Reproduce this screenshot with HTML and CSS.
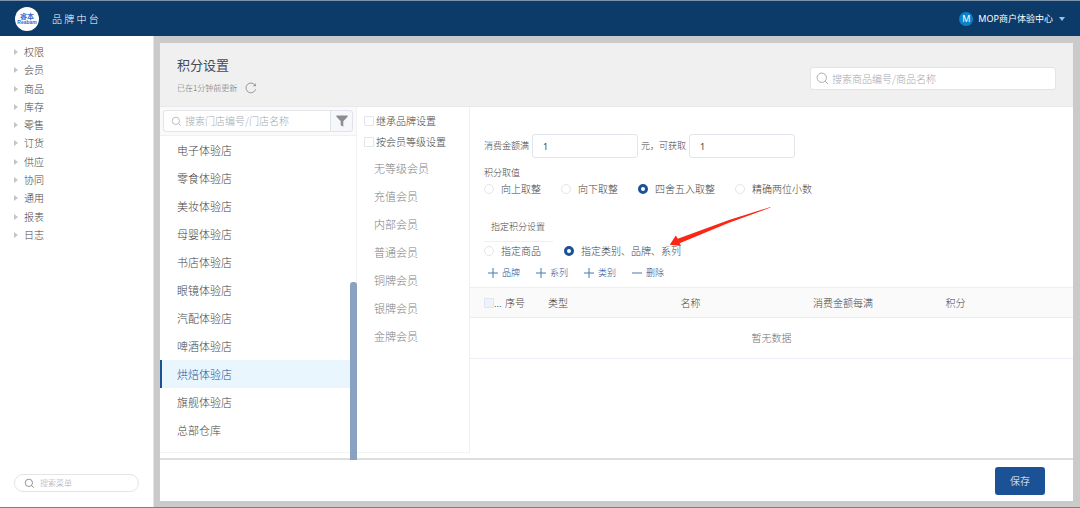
FILE: index.html
```html
<!DOCTYPE html>
<html lang="zh-CN">
<head>
<meta charset="utf-8">
<meta name="viewport" content="width=device-width, initial-scale=1">
<title>积分设置</title>
<link rel="stylesheet" href="styles.css">
</head>
<body>
<div class="app">
  <header class="topbar">
    <svg class="logo" viewBox="0 0 26 26" role="img" aria-label="睿本 Reabam">
      <circle cx="13" cy="13" r="12" fill="#fff"/>
      <text class="logo-cn" x="13" y="13" text-anchor="middle">睿本</text>
      <text class="logo-en" x="13" y="18" text-anchor="middle">Reabam</text>
    </svg>
    <span class="brand">品 牌 中 台</span>
    <button class="account" type="button">
      <span class="avatar">M</span>
      <span>MOP商户体验中心</span>
      <span class="caret"></span>
    </button>
  </header>

  <div class="body">
    <aside class="sidebar">
      <nav>
        <ul class="menu">
          <li><a href="#">权限</a></li>
          <li><a href="#">会员</a></li>
          <li><a href="#">商品</a></li>
          <li><a href="#">库存</a></li>
          <li><a href="#">零售</a></li>
          <li><a href="#">订货</a></li>
          <li><a href="#">供应</a></li>
          <li><a href="#">协同</a></li>
          <li><a href="#">通用</a></li>
          <li><a href="#">报表</a></li>
          <li><a href="#">日志</a></li>
        </ul>
      </nav>
      <label class="menu-search">
        <svg class="icon-menu-search" viewBox="0 0 12 12"><circle cx="5.3" cy="5.3" r="4"/><path d="M8.2 8.2L10.6 10.6"/></svg>
        <input type="text" placeholder="搜索菜单" aria-label="搜索菜单">
      </label>
    </aside>

    <main class="panel">
      <div class="panel-head">
        <div>
          <h1>积分设置</h1>
          <div class="updated">
            <span>已在1分钟前更新</span>
            <button class="refresh" type="button" aria-label="刷新">
              <svg viewBox="0 0 12 12"><path d="M10.6 7.4A4.9 4.9 0 1 1 9.8 2.9"/><path class="head" d="M10.9 1.2V4.3H7.8Z"/></svg>
            </button>
          </div>
        </div>
        <label class="goods-search">
          <svg class="icon-goods-search" viewBox="0 0 14 14"><circle cx="6.2" cy="6.2" r="5"/><path d="M9.8 9.8L13 13"/></svg>
          <input type="text" placeholder="搜索商品编号/商品名称" aria-label="搜索商品">
        </label>
      </div>

      <div class="columns">
        <section class="stores">
          <div class="store-tools">
            <label class="store-search">
              <svg class="icon-store-search" viewBox="0 0 12 12"><circle cx="5.3" cy="5.3" r="4"/><path d="M8.2 8.2L10.6 10.6"/></svg>
              <input type="text" placeholder="搜索门店编号/门店名称" aria-label="搜索门店">
            </label>
            <button class="filter" type="button" aria-label="筛选">
              <svg viewBox="0 0 12 12"><path d="M.4.4H11.6V1.8L7.3 6.2V11.8L4.7 10.2V6.2L.4 1.8Z"/></svg>
            </button>
          </div>
          <ul class="store-list">
            <li>电子体验店</li>
            <li>零食体验店</li>
            <li>美妆体验店</li>
            <li>母婴体验店</li>
            <li>书店体验店</li>
            <li>眼镜体验店</li>
            <li>汽配体验店</li>
            <li>啤酒体验店</li>
            <li class="selected">烘焙体验店</li>
            <li>旗舰体验店</li>
            <li>总部仓库</li>
          </ul>
          <div class="scroll-thumb"></div>
        </section>

        <section class="members">
          <div class="checks">
            <label><input class="box" type="checkbox">继承品牌设置</label>
            <label><input class="box" type="checkbox">按会员等级设置</label>
          </div>
          <ul class="member-list">
            <li>无等级会员</li>
            <li>充值会员</li>
            <li>内部会员</li>
            <li>普通会员</li>
            <li>铜牌会员</li>
            <li>银牌会员</li>
            <li>金牌会员</li>
          </ul>
        </section>

        <section class="settings">
          <div class="form">
            <div class="amounts">
              <label for="spend">消费金额满</label>
              <input id="spend" type="text" value="1">
              <label for="gain">元，可获取</label>
              <input id="gain" type="text" value="1">
            </div>
            <div class="caption">积分取值</div>
            <div class="radios rounding">
              <label><input type="radio" name="round">向上取整</label>
              <label><input type="radio" name="round">向下取整</label>
              <label><input type="radio" name="round" checked>四舍五入取整</label>
              <label><input type="radio" name="round">精确两位小数</label>
            </div>
            <h2>指定积分设置</h2>
            <div class="radios scope">
              <label><input type="radio" name="scope">指定商品</label>
              <label><input type="radio" name="scope" checked>指定类别、品牌、系列</label>
            </div>
            <div class="actions">
              <button type="button"><svg viewBox="0 0 10 10"><path d="M0 5H10M5 0V10"/></svg>品牌</button>
              <button type="button"><svg viewBox="0 0 10 10"><path d="M0 5H10M5 0V10"/></svg>系列</button>
              <button type="button"><svg viewBox="0 0 10 10"><path d="M0 5H10M5 0V10"/></svg>类别</button>
              <button type="button"><svg viewBox="0 0 10 10"><path d="M0 5H10"/></svg>删除</button>
            </div>
            <svg class="arrow" viewBox="0 0 102 40"><path d="M101.5 0L60 13L8.8 31.800L6.800 28.400L.8 37.800L12 39L10.600 36.300L60 15.800L101.500 .6Z"/></svg>
          </div>
          <table>
            <thead>
              <tr>
                <th class="col-check"><span class="check-cell"><input class="box" type="checkbox" aria-label="全选" disabled>...</span></th>
                <th class="col-index">序号</th>
                <th>类型</th>
                <th>名称</th>
                <th>消费金额每满</th>
                <th>积分</th>
              </tr>
            </thead>
            <tbody>
              <tr><td colspan="6">暂无数据</td></tr>
            </tbody>
          </table>
        </section>
      </div>

      <footer class="panel-foot">
        <button class="save" type="button">保存</button>
      </footer>
    </main>
  </div>
</div>
</body>
</html>
```
FILE: styles.css
```css
* {
  box-sizing: border-box;
}

body {
  margin: 0;
  font-family: "Noto Sans CJK SC", "Noto Sans", sans-serif;
  font-size: 10px;
  font-weight: 300;
  line-height: 16px;
  color: #444;
}

ul {
  margin: 0;
  padding: 0;
  list-style: none;
}

a {
  color: inherit;
  text-decoration: none;
}

button,
input {
  margin: 0;
  padding: 0;
  border: 0;
  background: none;
  font: inherit;
  color: inherit;
}

input[type="text"] {
  min-width: 0;
  outline: 0;
}

input::placeholder {
  color: #a4a8b0;
  opacity: 1;
}

svg {
  display: block;
  flex: none;
  fill: none;
}

.app {
  display: flex;
  flex-direction: column;
  min-height: 100vh;
  border-top: 1px solid #7d94aa;
  border-bottom: 1px solid #7f8079;
  background: #cacaca;
}

/* Top bar */

.topbar {
  display: flex;
  align-items: center;
  height: 35px;
  padding: 0 15px 0 14px;
  background: #0c3a69;
  color: #fff;
}

.logo {
  width: 26px;
  height: 26px;
}

.logo-cn {
  fill: #3268d8;
  font-size: 7px;
  font-weight: 700;
}

.logo-en {
  fill: #3268d8;
  font-family: "Liberation Sans", sans-serif;
  font-size: 5px;
  font-weight: 700;
}

.brand {
  margin-left: 12px;
  font-size: 10px;
  font-weight: 300;
}

.account {
  display: flex;
  align-items: center;
  margin-left: auto;
  font-family: "Noto Sans", "Noto Sans CJK SC", sans-serif;
  font-size: 9px;
  font-weight: 400;
}

.avatar {
  width: 14px;
  height: 14px;
  margin-right: 5px;
  border-radius: 50%;
  background: #0b82ca;
  line-height: 14px;
  text-align: center;
}

.caret {
  margin-left: 6px;
  border: 3px solid transparent;
  border-top: 4px solid #8cc8ee;
  border-bottom: 0;
}

.body {
  display: flex;
  flex: 1;
}

/* Sidebar */

.sidebar {
  display: flex;
  flex-direction: column;
  justify-content: space-between;
  width: 154px;
  padding: 7px 14px 15px;
  border-right: 1px solid #e4e4e4;
  background: #fff;
}

.menu {
  display: grid;
  grid-auto-rows: 1fr;
  min-height: 201px;
}

.menu a {
  display: flex;
  align-items: center;
  height: 100%;
  gap: 6px;
}

.menu a::before {
  content: "";
  border: 3px solid transparent;
  border-left: 4px solid #c3c5c9;
  border-right: 0;
}

.menu-search {
  display: flex;
  align-items: center;
  gap: 5px;
  height: 18px;
  padding: 0 9px;
  border: 1px solid #e4e4e4;
  border-radius: 9px;
  font-size: 8px;
}

.menu-search input {
  width: 100%;
}

.icon-menu-search {
  width: 11px;
  height: 11px;
  stroke: #8a8a8a;
}

/* Panel */

.panel {
  display: flex;
  flex: 1;
  flex-direction: column;
  min-width: 0;
  margin: 7px 7px 6px 6px;
  background: #fff;
}

.panel-head {
  display: flex;
  justify-content: space-between;
  height: 64px;
  padding: 12px 17px 0;
  border-bottom: 1px solid #e9e9e9;
  background: #f0f0f0;
}

h1 {
  margin: 0;
  font-size: 13px;
  font-weight: 400;
  line-height: 20px;
  color: #434a54;
}

.updated {
  display: flex;
  align-items: center;
  gap: 8px;
  height: 25px;
  font-size: 8px;
  color: #666;
}

.refresh svg {
  width: 12px;
  height: 12px;
  stroke: #999;
}

.refresh .head {
  fill: #999;
  stroke: none;
}

.goods-search {
  display: flex;
  align-items: center;
  gap: 3px;
  width: 246px;
  height: 23px;
  margin-top: 12px;
  padding: 0 5px;
  border: 1px solid #e2e4e9;
  border-radius: 3px;
  background: #fff;
}

.goods-search input {
  flex: 1;
}

.icon-goods-search {
  width: 13px;
  height: 13px;
  stroke: #a6a9b0;
}

.columns {
  display: flex;
  flex: 1;
  padding-bottom: 5px;
}

/* Stores */

.stores {
  position: relative;
  width: 197px;
  border-right: 1px solid #f3f3f3;
  border-bottom: 1px solid #f3f3f3;
  font-size: 11px;
}

.store-tools {
  display: flex;
  padding: 3px;
  border-bottom: 1px solid #f0f0f0;
  background: #fafafa;
  font-size: 10px;
}

.store-search {
  display: flex;
  flex: 1;
  align-items: center;
  gap: 3px;
  height: 22px;
  min-width: 0;
  padding: 0 7px;
  border: 1px solid #e2e4e9;
  border-right: 0;
  border-radius: 3px 0 0 3px;
  background: #fff;
}

.store-search input {
  flex: 1;
}

.icon-store-search {
  width: 11px;
  height: 11px;
  stroke: #b4b8c0;
}

.filter {
  display: grid;
  place-items: center;
  width: 23px;
  border: 1px solid #e0e3e9;
  border-radius: 0 3px 3px 0;
  background: #f5f7fa;
}

.filter svg {
  width: 12px;
  height: 12px;
  fill: #8c8c8c;
}

.store-list li {
  height: 28px;
  padding-left: 17px;
  line-height: 28px;
}

.store-list .selected {
  padding-left: 15px;
  border-left: 2px solid #1b5296;
  background: #e9f6fe;
  color: #1b5296;
}

.scroll-thumb {
  position: absolute;
  right: -1px;
  bottom: -8px;
  width: 7px;
  height: 178px;
  border-radius: 3px 3px 0 0;
  background: #8aa2c2;
}

/* Members */

.members {
  width: 113px;
  border-right: 1px solid #f0f0f0;
  border-bottom: 1px solid #f3f3f3;
}

.checks {
  display: grid;
  gap: 5px;
  padding: 6px 0 4px 7px;
}

.checks label {
  display: flex;
  align-items: center;
  gap: 2px;
}

.box {
  appearance: none;
  width: 10px;
  height: 10px;
  border: 1px solid #e2e5eb;
  border-radius: 1px;
  background: #fff;
}

.box:disabled {
  background: #edf2fc;
}

.member-list {
  padding-left: 17px;
  font-size: 11px;
  line-height: 28px;
  color: #808080;
}

/* Settings */

.settings {
  flex: 1;
  min-width: 0;
}

.form {
  position: relative;
  padding: 27px 14px 6px;
}

.amounts {
  display: flex;
  align-items: center;
  gap: 3px;
  font-size: 9px;
}

.amounts input {
  width: 106px;
  height: 24px;
  padding-left: 10px;
  border: 1px solid #e2e5eb;
  border-radius: 3px;
  font-family: "Noto Sans", sans-serif;
  font-weight: 400;
}

.caption {
  margin-top: 7px;
  font-size: 9px;
}

.radios {
  display: flex;
}

.radios label {
  display: flex;
  align-items: center;
  gap: 7px;
}

.radios input {
  appearance: none;
  width: 10px;
  height: 10px;
  border: 1px solid #e2e5eb;
  border-radius: 50%;
  background: #fff;
}

.radios input:checked {
  border: 3px solid #1b5296;
}

.rounding {
  gap: 20px;
}

.scope {
  gap: 23px;
  margin-top: 1px;
}

h2 {
  width: 69px;
  margin: 20px 0 0;
  padding: 2px 0 6px 7px;
  border-bottom: 1px solid #efefef;
  font-size: 9px;
  font-weight: 300;
  white-space: nowrap;
}

.actions {
  display: flex;
  gap: 16px;
  margin-top: 6px;
  padding-left: 4px;
  font-size: 9px;
  color: #1b5296;
}

.actions button {
  display: flex;
  align-items: center;
  gap: 4px;
}

.actions svg {
  width: 10px;
  height: 10px;
  stroke: #4a78b0;
}

.arrow {
  position: absolute;
  top: 100px;
  left: 199px;
  width: 102px;
  height: 40px;
  fill: #fb2714;
}

table {
  width: 100%;
  border-collapse: collapse;
  table-layout: fixed;
}

th {
  height: 30px;
  padding: 0 0 0 5px;
  border: solid #ebeef5;
  border-width: 1px 0;
  background: #fafafa;
  font-weight: 300;
  text-align: left;
}

.col-check {
  width: 30px;
  padding-left: 14px;
}

.check-cell {
  display: flex;
  align-items: center;
}

.check-cell .box {
  flex: none;
}

.col-index {
  width: 43px;
}

td {
  height: 41px;
  padding: 0;
  border-bottom: 1px solid #ebeef5;
  text-align: center;
  color: #707070;
}

/* Footer */

.panel-foot {
  display: flex;
  justify-content: flex-end;
  padding: 7px 28px 6px;
  border-top: 2px solid #dedede;
}

.save {
  width: 50px;
  height: 28px;
  border-radius: 3px;
  background: #1b5296;
  color: #fff;
}
```
